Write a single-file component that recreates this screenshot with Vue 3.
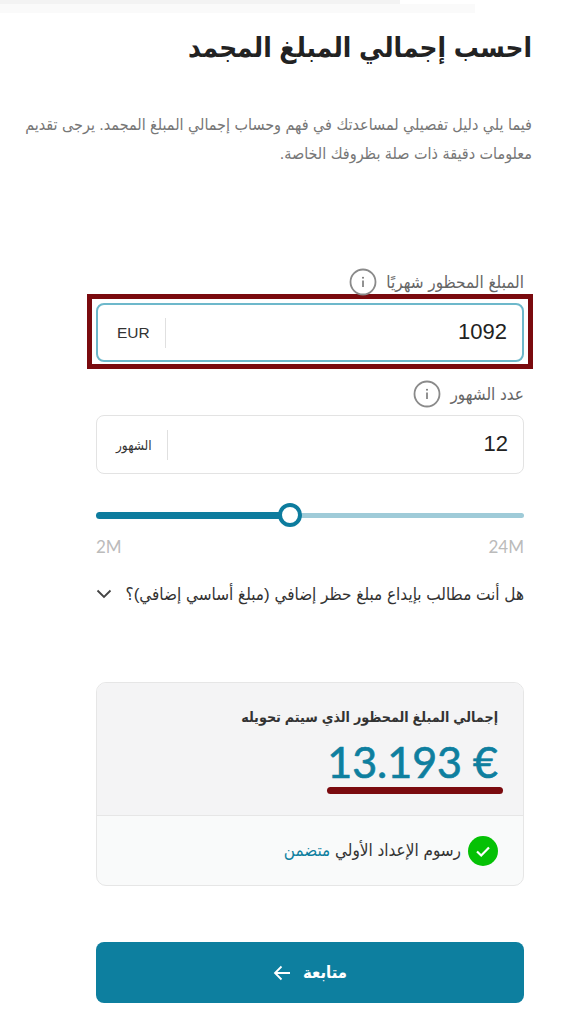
<template>
  <div class="page" dir="rtl">
    <div class="top-strip">
      <div class="strip-dark"></div>
      <div class="strip-light"></div>
    </div>

    <div class="intro">
      <h1>احسب إجمالي المبلغ المجمد</h1>
      <p>فيما يلي دليل تفصيلي لمساعدتك في فهم وحساب إجمالي المبلغ المجمد. يرجى تقديم معلومات دقيقة ذات صلة بظروفك الخاصة.</p>
    </div>

    <div class="form">
      <div class="field-label first">
        <span>المبلغ المحظور شهريًا</span>
        <svg class="info" viewBox="0 0 28 28" width="28" height="28">
          <circle cx="14" cy="14" r="12.5" fill="none" stroke="#8a8a8a" stroke-width="1.8" />
          <rect x="13.2" y="12.5" width="1.6" height="6.5" fill="#777" />
          <circle cx="14" cy="9.8" r="1" fill="#777" />
        </svg>
      </div>
      <div class="highlight">
        <div class="input-box active">
          <span class="value">{{ amount }}</span>
          <span class="sep"></span>
          <span class="unit latin">EUR</span>
        </div>
      </div>

      <div class="field-label second">
        <span>عدد الشهور</span>
        <svg class="info" viewBox="0 0 28 28" width="28" height="28">
          <circle cx="14" cy="14" r="12.5" fill="none" stroke="#8a8a8a" stroke-width="1.8" />
          <rect x="13.2" y="12.5" width="1.6" height="6.5" fill="#777" />
          <circle cx="14" cy="9.8" r="1" fill="#777" />
        </svg>
      </div>
      <div class="input-box">
        <span class="value">{{ months }}</span>
        <span class="sep"></span>
        <span class="unit small">الشهور</span>
      </div>

      <div class="slider" dir="ltr">
        <div class="track-on" :style="{ width: sliderPos + 'px' }"></div>
        <div class="thumb"></div>
        <div class="track-off"></div>
      </div>
      <div class="range" dir="ltr">
        <span>2M</span>
        <span>24M</span>
      </div>

      <div class="question">
        <span>هل أنت مطالب بإيداع مبلغ حظر إضافي (مبلغ أساسي إضافي)؟</span>
        <svg viewBox="0 0 16 10" width="16" height="10">
          <path d="M1.5 1.5 8 8l6.5-6.5" fill="none" stroke="#444" stroke-width="1.8" />
        </svg>
      </div>

      <div class="card">
        <div class="card-top">
          <div class="card-title">إجمالي المبلغ المحظور الذي سيتم تحويله</div>
          <div class="total-wrap">
            <div class="total" dir="ltr">13.193 €</div>
            <div class="total-line"></div>
          </div>
        </div>
        <div class="card-bottom">
          <svg viewBox="0 0 30 30" width="30" height="30">
            <circle cx="15" cy="15" r="15" fill="#05c105" />
            <path d="M9 15.5l4.2 4L21 11.5" fill="none" stroke="#fff" stroke-width="2.2" />
          </svg>
          <span>رسوم الإعداد الأولي <em>متضمن</em></span>
        </div>
      </div>

      <button class="continue">
        <span>متابعة</span>
        <svg viewBox="0 0 18 16" width="18" height="16">
          <path d="M17 8H2M8.5 1.5 2 8l6.5 6.5" fill="none" stroke="#fff" stroke-width="1.8" />
        </svg>
      </button>
    </div>
  </div>
</template>

<script setup>
import { ref } from 'vue'

const amount = ref(1092)
const months = ref(12)
const sliderPos = 194
</script>

<style scoped>
.page {
  position: relative;
  width: 564px;
  height: 1024px;
  overflow: hidden;
  background: #fff;
  font-family: "Liberation Sans", "DejaVu Sans Condensed", "DejaVu Sans", sans-serif;
  font-stretch: condensed;
  color: #222;
}

.top-strip {
  height: 13px;
  direction: ltr;
}

.strip-dark {
  width: 400px;
  height: 4px;
  background: #f3f3f3;
}

.strip-light {
  width: 475px;
  height: 9px;
  background: #fafafa;
}

.intro {
  padding: 17px 32px 0 0;
}

.intro h1 {
  margin: 0;
  font-size: 27.7px;
  line-height: 36px;
  font-weight: 700;
  color: #222;
}

.intro p {
  margin: 44px 0 0;
  font-size: 16px;
  line-height: 29px;
  color: #777;
}

.form {
  padding: 0 40px 0 40px;
  margin-left: 56px;
}

.field-label {
  display: flex;
  align-items: center;
  gap: 9px;
  height: 28px;
  font-size: 17px;
  color: #666;
}

.field-label.first {
  margin-top: 100px;
  margin-bottom: -2px;
}

.field-label.second {
  margin-top: 11px;
}

.highlight {
  margin: 0 -9px;
  padding: 4px 4px 2px;
  border: 5px solid #7a0a0e;
}

.input-box {
  display: flex;
  align-items: center;
  height: 59px;
  box-sizing: border-box;
  margin-top: 7px;
  padding: 0 15px 0 19px;
  border: 1px solid #e3e3e3;
  border-radius: 8px;
  background: #fff;
}

.highlight .input-box {
  margin-top: 0;
}

.input-box.active {
  border: 2px solid #6db8cb;
}

.value {
  flex: 1;
  text-align: right;
  font-size: 22px;
  line-height: 24px;
  margin-top: -2px;
  color: #222;
}

.sep {
  width: 1px;
  height: 30px;
  background: #e0e0e0;
  margin-left: 15px;
}

.unit {
  font-size: 15.5px;
  color: #333;
}

.unit.small {
  font-size: 13.5px;
}

.slider {
  position: relative;
  display: flex;
  align-items: center;
  height: 24px;
  margin-top: 29px;
}

.track-on {
  height: 7px;
  background: #0d7c9e;
  border-radius: 4px 0 0 4px;
}

.track-off {
  flex: 1;
  height: 5px;
  background: #9fcbd8;
  border-radius: 0 3px 3px 0;
}

.thumb {
  width: 24px;
  height: 24px;
  box-sizing: border-box;
  margin: 0 -12px;
  border: 4px solid #0d7c9e;
  border-radius: 50%;
  background: #fff;
  position: relative;
  z-index: 1;
}

.range {
  display: flex;
  justify-content: space-between;
  margin-top: 10px;
  font-family: Lato, "Liberation Sans", sans-serif;
  font-size: 17px;
  line-height: 20px;
  color: #bbb;
}

.question {
  display: flex;
  justify-content: space-between;
  align-items: center;
  margin-top: 25px;
  height: 24px;
  font-size: 17px;
  color: #333;
}

.card {
  margin-top: 76px;
  height: 204px;
  box-sizing: border-box;
  display: flex;
  flex-direction: column;
  border: 1px solid #e6e6e6;
  border-radius: 10px;
  overflow: hidden;
  background: #f9fafa;
}

.card-top {
  height: 133px;
  box-sizing: border-box;
  padding: 24px 25px 0 20px;
  background: #f4f4f5;
  border-bottom: 1px solid #e6e6e6;
}

.card-title {
  font-size: 14.2px;
  line-height: 20px;
  font-weight: 700;
  color: #333;
}

.total-wrap {
  display: flex;
  flex-direction: column;
  align-items: flex-start;
  width: max-content;
  margin-top: 13px;
  margin-right: -5px;
}

.total {
  padding-right: 5px;
  font-family: Lato, "Liberation Sans", sans-serif;
  font-size: 43px;
  line-height: 44px;
  font-weight: 400;
  -webkit-text-stroke: 0.7px #0e7f9f;
  color: #0e7f9f;
}

.total-line {
  width: 100%;
  height: 7px;
  margin-top: 3px;
  border-radius: 3.5px;
  background: #7a0a0e;
}

.card-bottom {
  flex: 1;
  display: flex;
  align-items: center;
  gap: 7px;
  padding: 0 25px 0 20px;
  font-size: 17px;
  color: #333;
}

.card-bottom em {
  font-style: normal;
  color: #0e7f9f;
}

.continue {
  display: flex;
  align-items: center;
  justify-content: center;
  gap: 12px;
  width: 100%;
  height: 61px;
  margin-top: 56px;
  border: none;
  border-radius: 8px;
  background: #0d7f9f;
  color: #fff;
  font-family: inherit;
  font-stretch: inherit;
  font-size: 16.5px;
  font-weight: 700;
}
</style>
